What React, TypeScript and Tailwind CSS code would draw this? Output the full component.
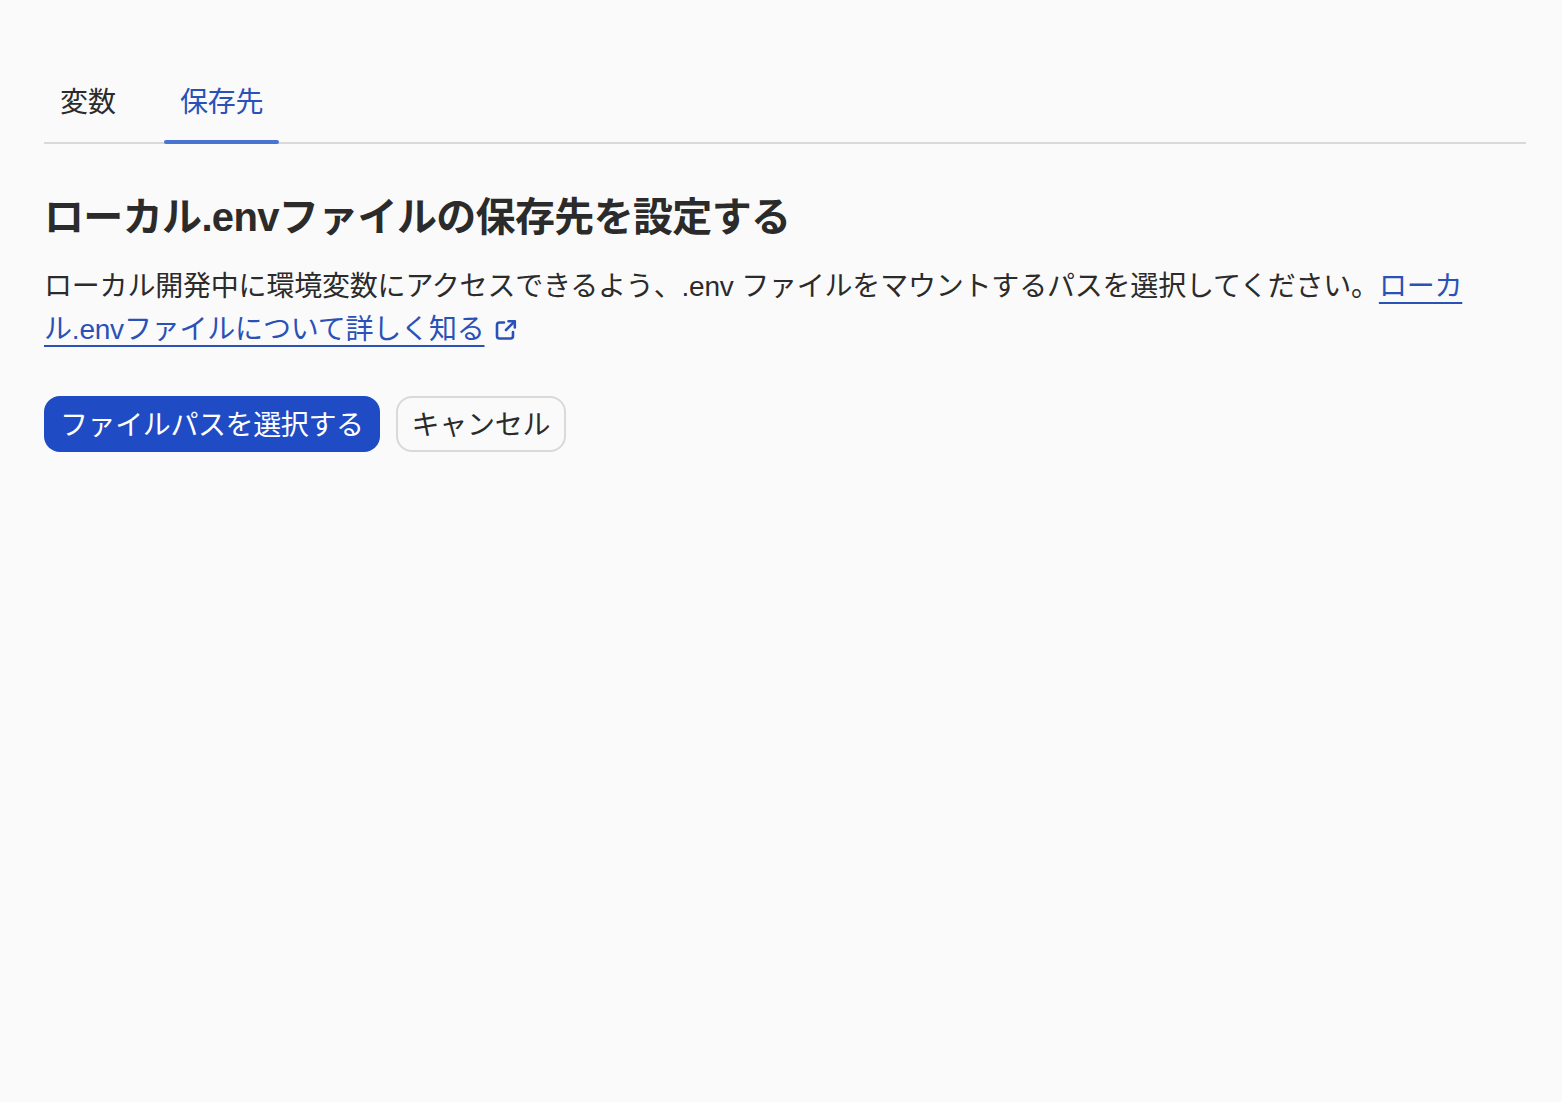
const font = 'font-["Liberation_Sans","Noto_Sans_CJK_JP",sans-serif]';

function ExternalIcon() {
  return (
    <svg className="ml-2.5 inline-block align-[-2px] text-[#2a51b8]" width="22" height="22" viewBox="0 0 22 22" fill="none" stroke="currentColor" strokeWidth="2.6" strokeLinecap="round" strokeLinejoin="round">
      <path d="M9 3.5H4.5a2.5 2.5 0 0 0-2.5 2.5v11a2.5 2.5 0 0 0 2.5 2.5h11a2.5 2.5 0 0 0 2.5-2.5V13" />
      <path d="M11 11 19.5 2.5" />
      <path d="M13.5 2.2h6.3v6.3" />
    </svg>
  );
}

export default function App() {
  return (
    <div className={`min-h-[1102px] bg-[#fafafa] pr-9 pl-11 pt-[60px] text-[#2b2b2b] ${font}`}>
      <div className="flex h-[84px] items-stretch gap-8 border-b-2 border-[#d9d9d9]">
        <div className="flex h-[84px] items-center px-4 pt-0.5 text-[28px]">変数</div>
        <div className="relative flex h-[84px] items-center px-4 pt-0.5 text-[28px] tracking-[-0.2px] text-[#2a51b8]">
          保存先
          <span className="absolute right-0 bottom-0 left-0 h-1 rounded-sm bg-[#4a74d1]" />
        </div>
      </div>
      <h1 className="mt-[46px] text-[40px] leading-[54px] font-bold tracking-[-0.65px]">ローカル.envファイルの保存先を設定する</h1>
      <p className="mt-[21px] text-[28px] leading-[43px] tracking-[-0.2px]">
        ローカル開発中に環境変数にアクセスできるよう、.env ファイルをマウントするパスを選択してください。
        <a className="text-[#2a51b8] underline decoration-2 underline-offset-[6px]">ローカル.envファイルについて詳しく知る</a>
        <ExternalIcon />
      </p>
      <div className="mt-[45px] flex gap-4">
        <button className="h-14 rounded-2xl bg-[#1f4bc4] px-4 pt-1 text-[28px] tracking-[-0.4px] text-white">ファイルパスを選択する</button>
        <button className="h-14 rounded-2xl border-2 border-[#d9d9d9] px-[14px] pt-1 text-[28px] tracking-[-0.3px]">キャンセル</button>
      </div>
    </div>
  );
}
